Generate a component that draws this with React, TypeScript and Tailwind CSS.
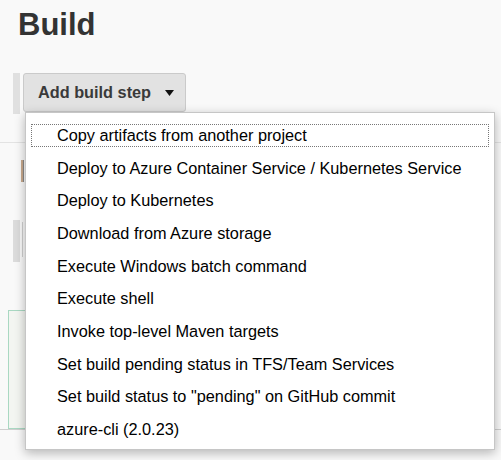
const STEPS = [
  'Copy artifacts from another project',
  'Deploy to Azure Container Service / Kubernetes Service',
  'Deploy to Kubernetes',
  'Download from Azure storage',
  'Execute Windows batch command',
  'Execute shell',
  'Invoke top-level Maven targets',
  'Set build pending status in TFS/Team Services',
  'Set build status to "pending" on GitHub commit',
  'azure-cli (2.0.23)',
];

export default function App() {
  return (
    <div className="relative h-[460px] w-[501px] overflow-hidden bg-[#f9f9f9] font-['Liberation_Sans',Arial,sans-serif]">
      <h1 className="ml-[18px] pt-[7px] text-[31px] font-bold leading-[36px] text-[#333]">Build</h1>

      <div className="mt-[30px] flex items-start gap-[3px] pl-[13px]">
        <div className="h-[41px] w-[7px] bg-[#e0e0e0]" />
        <button className="flex h-[39px] w-[163px] items-center rounded-[3px] border border-[#cacaca] bg-[#e2e2e2] pl-[14px] text-[16.3px] font-bold text-[#3a3a3a]">
          Add build step
          <svg className="ml-[14px]" width="9" height="6" viewBox="0 0 9 6">
            <path d="M0 0h9L4.5 6z" fill="#111" />
          </svg>
        </button>
      </div>

      <div className="mt-[28px] border-t border-[#e3e3e3]">
        <div className="ml-[21px] mt-[17px] h-[22px] w-[3px] border-r border-[#8a8a8a] bg-[#c9a98c]" />
        <div className="mt-[38px] flex items-start gap-[2px] pl-[13px]">
          <div className="h-[42px] w-[7px] bg-[#dcdcdc]" />
          <div className="mt-[2px] h-[35px] w-px bg-[#cfcfcf]" />
        </div>
        <div className="ml-[8px] mt-[48px] h-[119px] w-[60px] border border-[#a9d8c2] bg-[#f3f5f1]" />
        <div className="border-t border-[#cfcfcf]" />
      </div>

      <div className="absolute left-[25px] top-[112px] w-[470px] border border-[#c6c6c6] bg-white pb-[3px] pt-[6px] shadow-[0_3px_10px_rgba(0,0,0,0.28)]">
        {STEPS.map((step, i) => (
          <div key={step} className="h-[32.67px] px-[5px] py-[5px]">
            <div
              className={
                'flex h-full items-center border pl-[25px] text-[16.3px] text-black ' +
                (i === 0 ? 'border-dotted border-[#777]' : 'border-transparent')
              }
            >
              {step}
            </div>
          </div>
        ))}
      </div>
    </div>
  );
}
